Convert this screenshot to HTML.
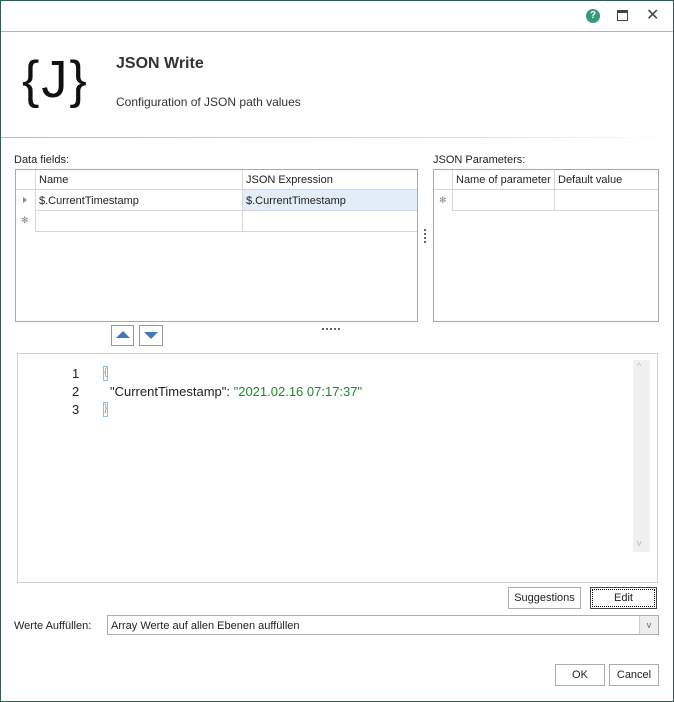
<!DOCTYPE html>
<html><head><style>
*{margin:0;padding:0;box-sizing:border-box}
body{width:674px;height:702px;background:#fff;font-family:"Liberation Sans",sans-serif;font-size:11px;color:#222;position:relative;overflow:hidden}
.a{position:absolute}
.frame{left:0;top:0;width:674px;height:702px;border:1px solid #2f5f50}
.grid{border:1px solid #a9a9a9;background:#fff}
.l{background:#d6d6d6}
.btn{border:1px solid #acacac;background:#fff;text-align:center;font-size:11px;line-height:20px}
</style></head><body>
<div class="a frame"></div>
<div class="a" style="left:586px;top:9px;width:14px;height:14px;border-radius:7px;background:#3a9a75;color:#fff;font-weight:bold;font-size:10px;text-align:center;line-height:14px">?</div>
<div class="a" style="left:617px;top:10px;width:11px;height:11px;border:1px solid #444;border-top:3px solid #444"></div>
<div class="a" style="left:646px;top:5px;font-size:16px;color:#444">✕</div>
<div class="a" style="left:1px;top:31px;width:672px;height:1px;background:#e8a865"></div>
<div class="a" style="left:22px;top:50px;font-size:52px;line-height:60px;color:#111;letter-spacing:2px">{J}</div>
<div class="a" style="left:116px;top:55px;font-size:16px;font-weight:bold;color:#333">JSON Write</div>
<div class="a" style="left:116px;top:95px;font-size:12px;color:#333">Configuration of JSON path values</div>
<div class="a" style="left:1px;top:137px;width:672px;height:1px;background:linear-gradient(90deg,#bbb,#ddd 70%,#fff)"></div>
<div class="a" style="left:14px;top:154px">Data fields:</div>
<div class="a grid" style="left:15px;top:169px;width:403px;height:153px"></div>
<div class="a l" style="left:35px;top:170px;width:1px;height:61px"></div>
<div class="a l" style="left:242px;top:170px;width:1px;height:61px"></div>
<div class="a l" style="left:16px;top:189px;width:401px;height:1px"></div>
<div class="a l" style="left:35px;top:210px;width:382px;height:1px"></div>
<div class="a l" style="left:35px;top:231px;width:382px;height:1px"></div>
<div class="a" style="left:243px;top:190px;width:174px;height:20px;background:#e3eef9"></div>
<div class="a" style="left:39px;top:174px">Name</div>
<div class="a" style="left:246px;top:174px">JSON Expression</div>
<div class="a" style="left:39px;top:195px">$.CurrentTimestamp</div>
<div class="a" style="left:246px;top:195px">$.CurrentTimestamp</div>
<div class="a" style="left:23px;top:197px;width:0;height:0;border-left:4px solid #888;border-top:3px solid transparent;border-bottom:3px solid transparent"></div>
<div class="a" style="left:21px;top:215px;font-size:9px;color:#888">✻</div>
<div class="a" style="left:424px;top:229px;width:2px;height:15px;background:repeating-linear-gradient(#666 0 2px,transparent 2px 4px)"></div>
<div class="a" style="left:322px;top:328px;width:19px;height:2px;background:repeating-linear-gradient(90deg,#666 0 2px,transparent 2px 4px)"></div>
<div class="a" style="left:433px;top:154px">JSON Parameters:</div>
<div class="a grid" style="left:433px;top:169px;width:226px;height:153px"></div>
<div class="a l" style="left:452px;top:170px;width:1px;height:41px"></div>
<div class="a l" style="left:554px;top:170px;width:1px;height:41px"></div>
<div class="a l" style="left:434px;top:189px;width:224px;height:1px"></div>
<div class="a l" style="left:452px;top:210px;width:206px;height:1px"></div>
<div class="a" style="left:456px;top:174px">Name of parameter</div>
<div class="a" style="left:558px;top:174px">Default value</div>
<div class="a" style="left:439px;top:195px;font-size:9px;color:#888">✻</div>
<div class="a" style="left:111px;top:325px;width:23px;height:21px;border:1px solid #999;background:#fff"></div>
<div class="a" style="left:116px;top:331px;border-left:7px solid transparent;border-right:7px solid transparent;border-bottom:7px solid #3c7ab8"></div>
<div class="a" style="left:139px;top:325px;width:24px;height:21px;border:1px solid #999;background:#fff"></div>
<div class="a" style="left:144px;top:332px;border-left:7px solid transparent;border-right:7px solid transparent;border-top:7px solid #3c7ab8"></div>
<div class="a" style="left:17px;top:353px;width:641px;height:230px;border:1px solid #d0d0d0"></div>
<div class="a" style="left:633px;top:360px;width:17px;height:192px;background:#f0f0f0"></div>
<div class="a" style="left:637px;top:361px;font-size:9px;color:#bbb">^</div>
<div class="a" style="left:637px;top:538px;font-size:9px;color:#bbb">v</div>
<div style="font-size:13px;font-family:'Liberation Sans',sans-serif">
<div class="a" style="left:72px;top:366px">1</div>
<div class="a" style="left:72px;top:384px">2</div>
<div class="a" style="left:72px;top:402px">3</div>
<div class="a" style="left:103px;top:366px;width:5px;height:15px;border:1px solid #8cc0dc;font-size:10px;line-height:12px;color:#999">{</div>
<div class="a" style="left:110px;top:384px">"CurrentTimestamp": <span style="color:#1a8a2a">"2021.02.16 07:17:37"</span></div>
<div class="a" style="left:103px;top:402px;width:5px;height:15px;border:1px solid #8cc0dc;font-size:10px;line-height:12px;color:#999">}</div>
</div>
<div class="a btn" style="left:508px;top:587px;width:73px;height:22px">Suggestions</div>
<div class="a btn" style="left:590px;top:587px;width:67px;height:22px;border-color:#444;outline:1px dotted #000;outline-offset:-3px">Edit</div>
<div class="a" style="left:14px;top:620px">Werte Auffüllen:</div>
<div class="a" style="left:107px;top:615px;width:552px;height:20px;border:1px solid #acacac"></div>
<div class="a" style="left:111px;top:620px">Array Werte auf allen Ebenen auffüllen</div>
<div class="a" style="left:639px;top:616px;width:19px;height:18px;background:#eee;border-left:1px solid #ccc;text-align:center;font-size:9px;line-height:18px;color:#666">v</div>
<div class="a btn" style="left:555px;top:664px;width:50px;height:22px">OK</div>
<div class="a btn" style="left:609px;top:664px;width:50px;height:22px">Cancel</div>
</body></html>
